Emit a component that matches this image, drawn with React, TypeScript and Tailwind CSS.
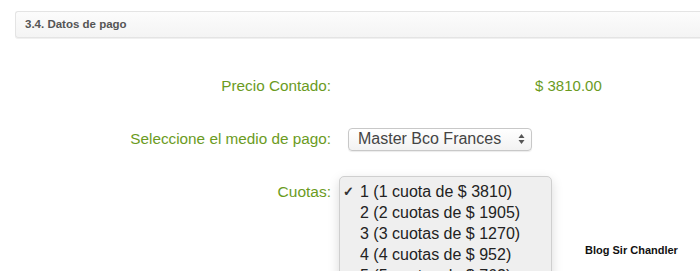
import React from 'react';

const CUOTAS = [
  '1 (1 cuota de $ 3810)',
  '2 (2 cuotas de $ 1905)',
  '3 (3 cuotas de $ 1270)',
  '4 (4 cuotas de $ 952)',
  '5 (5 cuotas de $ 762)',
];

export default function App() {
  return (
    <div className="relative w-[700px] h-[271px] overflow-hidden bg-white font-['Liberation_Sans',Arial,sans-serif]">
      {/* Section header */}
      <div className="pt-[11px] pl-[15px]">
        <div className="h-[27px] border border-r-0 border-[#e4e4e4] rounded-l-[3px] bg-gradient-to-b from-[#fcfcfc] to-[#f4f4f4] flex items-center pl-[9px] shadow-[0_1px_0_#f0f0f0]">
          <span className="text-[11.5px] font-bold text-[#555555]">3.4. Datos de pago</span>
        </div>
      </div>

      {/* Form rows */}
      <div className="mt-[38px] flex flex-col">
        <div className="flex items-center h-[20px]">
          <div className="w-[331px] text-right text-[15.3px] text-[#6b9b1e]">Precio Contado:</div>
          <div className="pl-[204px] text-[15px] text-[#6b9b1e]">$ 3810.00</div>
        </div>

        <div className="flex items-center mt-[31px] h-[24px]">
          <div className="w-[331px] text-right text-[15.3px] text-[#6b9b1e]">Seleccione el medio de pago:</div>
          <div className="ml-[17px] w-[184px] h-[23px] rounded-[4px] border border-[#c8c8c8] bg-gradient-to-b from-white to-[#f2f2f2] flex items-center justify-between pl-[9px] pr-[6px] shadow-[0_1px_1px_rgba(0,0,0,0.08)]">
            <span className="text-[16px] text-[#444444]">Master Bco Frances</span>
            <svg width="7" height="12" viewBox="0 0 7 12">
              <path d="M3.5 1 L6.5 5 L0.5 5 Z" fill="#555" />
              <path d="M3.5 11 L6.5 7 L0.5 7 Z" fill="#555" />
            </svg>
          </div>
        </div>

        <div className="flex items-start mt-[25px]">
          <div className="w-[331px] text-right text-[15.5px] text-[#6b9b1e] mt-[4px]">Cuotas:</div>
          <div className="ml-[8px] w-[213px] rounded-[5px] border border-[#cfcfcf] bg-[#efefef] pt-[4px] pb-[4px] shadow-[0_4px_12px_rgba(0,0,0,0.15)]">
            {CUOTAS.map((c, i) => (
              <div key={c} className="flex items-center h-[21px] text-[16px] text-[#222222]">
                <span className="w-[20px] pl-[3px] text-[13px] font-bold text-[#333333]">{i === 0 ? '✓' : ''}</span>
                <span>{c}</span>
              </div>
            ))}
          </div>
        </div>
      </div>

      {/* Watermark */}
      <div className="absolute left-[585px] top-[242px] text-[11px] font-bold text-[#111111]">
        Blog Sir Chandler
      </div>
    </div>
  );
}
